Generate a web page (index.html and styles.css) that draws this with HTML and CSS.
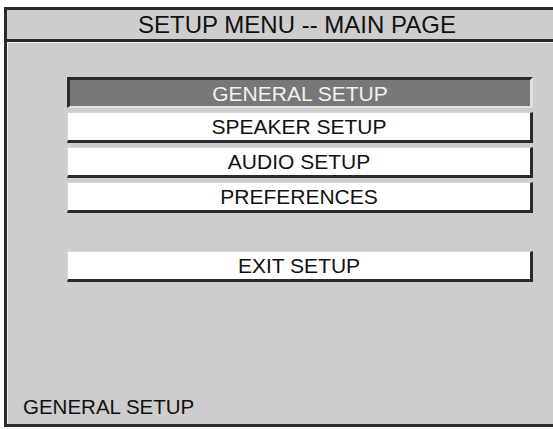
FILE: index.html
```html
<!DOCTYPE html>
<html lang="en">
<head>
    <meta charset="UTF-8">
    <meta name="viewport" content="width=device-width, initial-scale=1.0">
    <title>Setup Menu</title>
    <link rel="stylesheet" href="styles.css">
</head>
<body>

<div class="screen">
    <div class="title">SETUP MENU -- MAIN PAGE</div>
    <div class="page">
        <div class="menu">
            <div class="item selected">GENERAL SETUP</div>
            <div class="item">SPEAKER SETUP</div>
            <div class="item">AUDIO SETUP</div>
            <div class="item">PREFERENCES</div>
            <div class="item exit">EXIT SETUP</div>
        </div>
        <!-- Texto de ayuda del elemento activo -->
        <div class="status">GENERAL SETUP</div>
    </div>
</div>

</body>
</html>
```

FILE: styles.css
```css
html, body {
    margin: 0;
    overflow: hidden;
}
body {
    background-color: #fff;
    color: #111;
    font-family: "Liberation Sans", Arial, sans-serif;
}
.screen {
    margin: 7px 0 0 4px;
    height: 420px;
    box-sizing: border-box;
    border: 3px solid #2a2a2a;
    border-right: none;
    background-color: #cdcdcd;
    display: flex;
    flex-direction: column;
}
.title {
    height: 32px;
    box-sizing: border-box;
    padding-left: 34px;
    border-bottom: 3px solid #2a2a2a;
    text-align: center;
    font-size: 24px;
    line-height: 30px;
}
.page {
    flex: 1;
    border-top: 1px solid #f4f4f4;
    border-left: 1px solid #f4f4f4;
    display: flex;
    flex-direction: column;
    justify-content: space-between;
    padding: 34px 0 0 59px;
}
.menu {
    width: 466px;
    display: flex;
    flex-direction: column;
    gap: 4px;
}
.item {
    height: 31px;
    box-sizing: border-box;
    background-color: #fff;
    border-top: 1px solid #d8d8d8;
    border-left: 1px solid #d8d8d8;
    border-right: 3px solid #2a2a2a;
    border-bottom: 3px solid #2a2a2a;
    text-align: center;
    font-size: 21px;
    line-height: 28px;
}
.item.selected {
    background-color: #787878;
    color: #f2f2f2;
    border-top: 3px solid #2a2a2a;
    border-left: 3px solid #2a2a2a;
    border-right: 3px solid #e2e2e2;
    border-bottom: 2px solid #e2e2e2;
    line-height: 27px;
}
.item.exit {
    margin-top: 34px;
}
.status {
    margin-left: -44px;
    padding-bottom: 5px;
    font-size: 20.5px;
}
```
